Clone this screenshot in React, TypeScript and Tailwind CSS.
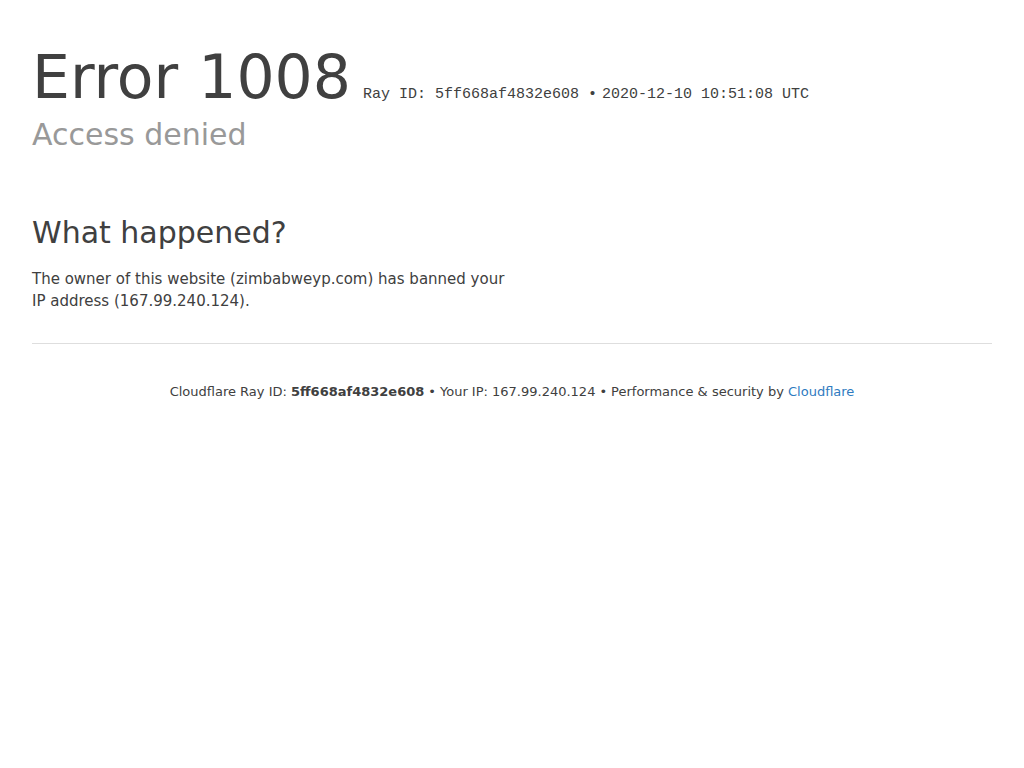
export default function App() {
  return (
    <div className="min-h-screen bg-white px-8 pt-[47px] text-[#404040] font-['DejaVu_Sans',sans-serif]">
      {/* Header */}
      <h1 className="flex items-baseline text-[60px] leading-[60px] font-normal">
        <span>Error</span>
        <span className="ml-[20px]">1008</span>
        <span className="ml-[12px] text-[15px] leading-[20px] font-['Liberation_Mono',monospace]">
          Ray ID: 5ff668af4832e608 •
        </span>
        <span className="ml-[5px] text-[15px] leading-[20px] font-['Liberation_Mono',monospace]">
          2020-12-10 10:51:08 UTC
        </span>
      </h1>
      <h2 className="mt-[10px] text-[30px] leading-[36px] text-[#999999] font-normal">Access denied</h2>

      {/* What happened */}
      <section className="mt-[62px] w-[480px]">
        <h2 className="text-[30px] leading-[36px] font-normal">What happened?</h2>
        <p className="mt-[17px] text-[15px] leading-[22px]">
          The owner of this website (zimbabweyp.com) has banned your IP address (167.99.240.124).
        </p>
      </section>

      {/* Footer */}
      <div className="mt-[31px] border-t border-[#dedede] pt-[38px] text-center text-[13px] leading-[20px]">
        <span>Cloudflare Ray ID: </span>
        <strong className="font-bold">5ff668af4832e608</strong>
        <span className="mx-[4px]">•</span>
        <span>Your IP: 167.99.240.124</span>
        <span className="mx-[4px]">•</span>
        <span>Performance &amp; security by </span>
        <a href="#" className="text-[#2f7bbf]">Cloudflare</a>
      </div>
    </div>
  );
}
